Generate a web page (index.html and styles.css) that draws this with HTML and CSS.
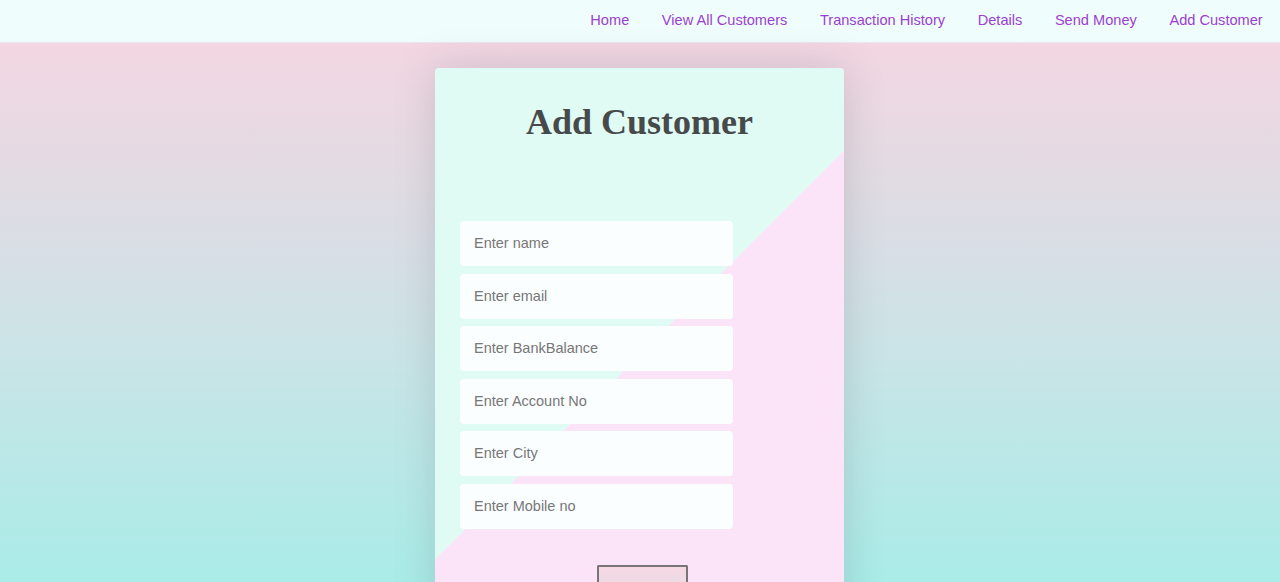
FILE: index.html
```html
<!DOCTYPE html>
<html lang="en">
<head>
<meta charset="utf-8">
<title>Add Customer</title>
<link rel="stylesheet" href="styles.css">
</head>
<body>
<nav class="nav">
  <a class="nav-link" href="#">Home</a>
  <a class="nav-link" href="#">View All Customers</a>
  <a class="nav-link" href="#">Transaction History</a>
  <a class="nav-link" href="#">Details</a>
  <a class="nav-link" href="#">Send Money</a>
  <a class="nav-link" href="#">Add Customer</a>
</nav>
<main class="main">
  <section class="card">
    <h1 class="title">Add Customer</h1>
    <form class="form">
      <input class="field" type="text" placeholder="Enter name">
      <input class="field" type="text" placeholder="Enter email">
      <input class="field" type="text" placeholder="Enter BankBalance">
      <input class="field" type="text" placeholder="Enter Account No">
      <input class="field" type="text" placeholder="Enter City">
      <input class="field" type="text" placeholder="Enter Mobile no">
      <div class="actions"><button class="submit" type="button"></button></div>
    </form>
  </section>
</main>
</body>
</html>
```
FILE: styles.css
```css
html, body {
  margin: 0;
  padding: 0;
}
body {
  height: 582px;
  overflow: hidden;
  font-family: "Liberation Sans", Arial, sans-serif;
  background: linear-gradient(180deg, #f8d5e1 0px, #dfdce4 200px, #c6e5e7 380px, #a9ece8 582px);
}
.nav {
  height: 42px;
  display: flex;
  justify-content: flex-end;
  align-items: center;
  padding: 0 1px 2px 0;
  background: #f0fdfd;
  box-shadow: 0 1px 0 #ece6ee;
  box-sizing: border-box;
}
.nav-link {
  font-size: 14.6px;
  color: #9b3fd1;
  text-decoration: none;
  padding: 0 16.3px;
  line-height: 40px;
}
.main {
  display: flex;
  justify-content: center;
  padding-top: 26px;
}
.card {
  width: 409px;
  height: 573px;
  margin-left: -1px;
  box-sizing: border-box;
  padding: 32px 25px 0;
  border-radius: 4px;
  background: linear-gradient(135deg, #e0faf4 50%, #fbe4f7 50%);
  box-shadow: 0 0 40px rgba(90, 90, 100, 0.22);
}
.title {
  margin: 0;
  font-family: "Liberation Serif", "Times New Roman", serif;
  font-weight: bold;
  font-size: 36px;
  line-height: 44px;
  color: #474a4a;
  text-align: center;
}
.form {
  margin-top: 77px;
  display: flex;
  flex-direction: column;
  gap: 7.6px;
}
.field {
  width: 273px;
  height: 45px;
  box-sizing: border-box;
  border: none;
  border-radius: 4px;
  background: #fbfeff;
  padding: 0 14px 1px;
  font-family: "Liberation Sans", Arial, sans-serif;
  font-size: 14.5px;
  color: #333;
  outline: none;
}
.field::placeholder {
  color: #777;
}
.actions {
  display: flex;
  justify-content: center;
  margin-top: 28px;
  padding-left: 5px;
}
.submit {
  width: 91px;
  height: 32px;
  border: 2px solid #7a7478;
  border-bottom: none;
  border-radius: 2px 2px 0 0;
  background: linear-gradient(180deg, #f6d8e4, #e3dde3);
  padding: 0;
}
```
